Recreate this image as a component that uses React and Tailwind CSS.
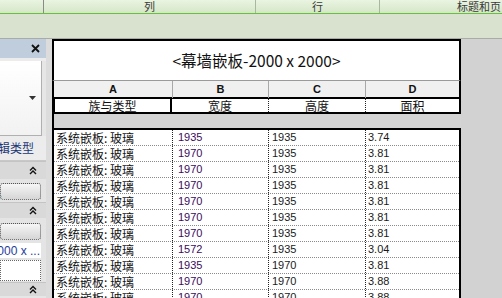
import React from "react";

const CJK = { fontFamily: '"Noto Sans CJK SC", "Liberation Sans", sans-serif' };
const NUM = { fontFamily: '"Liberation Sans", "Noto Sans CJK SC", sans-serif' };

const rows = [
  ["1935", "1935", "3.74"],
  ["1970", "1935", "3.81"],
  ["1970", "1935", "3.81"],
  ["1970", "1935", "3.81"],
  ["1970", "1935", "3.81"],
  ["1970", "1935", "3.81"],
  ["1970", "1935", "3.81"],
  ["1572", "1935", "3.04"],
  ["1935", "1970", "3.81"],
  ["1970", "1970", "3.88"],
  ["1970", "1970", "3.88"],
];

function Chevrons() {
  return (
    <svg width="8" height="9" viewBox="0 0 8 9" className="block">
      <polyline points="1,4.5 4,1.5 7,4.5" fill="none" stroke="#111" strokeWidth="1.4" />
      <polyline points="1,8 4,5 7,8" fill="none" stroke="#111" strokeWidth="1.4" />
    </svg>
  );
}

function SectionHeader({ h }) {
  return (
    <div className={`${h} flex items-center justify-end pr-[9px] bg-[#d9d9d9] border-t border-[#c4c4c4]`}>
      <Chevrons />
    </div>
  );
}

export default function App() {
  return (
    <div className="w-[502px] h-[298px] overflow-hidden flex flex-col bg-[#d2d2d2]" style={CJK}>
      {/* ribbon labels */}
      <div className="h-[14px] flex border-b border-[#68c040] bg-gradient-to-b from-[#eaf4e2] to-[#d5e7c7] text-[11px] leading-none text-[#3a3a3a] whitespace-nowrap">
        <div className="w-[44px] shrink-0 border-r border-[#8a8a8a]"></div>
        <div className="w-[212px] shrink-0 flex items-center justify-center border-r border-[#a8b8a0]">列</div>
        <div className="w-[124px] shrink-0 flex items-center justify-center border-r border-[#a8b8a0]">行</div>
        <div className="flex-1 min-w-0 flex items-center justify-start pl-[77px] overflow-hidden">标题和页</div>
      </div>
      <div className="h-[25px] bg-[#d8e2cf] border-b border-[#a9aca6]"></div>

      {/* content */}
      <div className="flex flex-1 min-h-0">
        {/* properties panel */}
        <div className="w-[46px] shrink-0 flex flex-col bg-[#e6e6e6] overflow-hidden">
          <div className="h-[19px] shrink-0 bg-[#bfcddc] flex items-center justify-end pr-[6px]">
            <svg width="9" height="9" viewBox="0 0 9 9">
              <path d="M1 1 L8 8 M8 1 L1 8" stroke="#111" strokeWidth="1.8" />
            </svg>
          </div>
          <div className="h-[3px] shrink-0 bg-[#ececec]"></div>
          <div className="h-[75px] shrink-0 mr-[4px] bg-gradient-to-b from-[#ffffff] to-[#f2f2f2] border-r border-b border-[#b0b0b0] flex items-center justify-end pr-[5px]">
            <svg width="7" height="5" viewBox="0 0 7 5">
              <polygon points="0,0 7,0 3.5,4" fill="#333" />
            </svg>
          </div>
          <div className="h-[25px] shrink-0 bg-[#ececec] flex items-center justify-end pr-[12px] border-b border-[#c8c8c8] overflow-hidden">
            <span className="text-[12px] leading-none text-[#1c3676] whitespace-nowrap">编辑类型</span>
          </div>
          <SectionHeader h="h-[18px]" />
          <div className="h-[23px] shrink-0 bg-[#e4e4e4] pt-[4px] pr-[5px]">
            <div className="h-[17px] rounded-[3px] border border-dotted border-[#555] bg-gradient-to-b from-[#f6f6f6] to-[#d6d6d6] flex items-end overflow-hidden">
              <span className="text-[11px] leading-[12px] -ml-[8px] text-[#111]" style={NUM}>...</span>
            </div>
          </div>
          <SectionHeader h="h-[16px]" />
          <div className="h-[64px] shrink-0 bg-[#e4e4e4] pt-[5px] pr-[5px] flex flex-col">
            <div className="h-[17px] rounded-[3px] border border-dotted border-[#555] bg-gradient-to-b from-[#f6f6f6] to-[#d6d6d6]"></div>
            <div className="h-[15px] mt-[3px] bg-white flex items-center justify-end overflow-hidden pr-[1px]">
              <span className="text-[12px] leading-none text-[#1f3d9c] whitespace-nowrap" style={NUM}>2000 x ...</span>
            </div>
            <div className="h-[21px] mt-[2px] bg-white border border-dotted border-[#666]"></div>
          </div>
          <SectionHeader h="h-[14px]" />
        </div>
        <div className="w-[6px] shrink-0 bg-[#dcdcdc]"></div>

        {/* schedule */}
        <div className="flex-1 flex flex-col">
          <div className="w-[409px]">
            {/* title */}
            <div className="h-[41px] bg-white border-t-2 border-x-2 border-black flex items-center justify-center text-[15.5px] text-[#111]">
              &lt;幕墙嵌板-2000 x 2000&gt;
            </div>
            {/* letters */}
            <div className="h-[17px] bg-[#f0f0f0] border-t border-x-2 border-x-black border-t-[#9a9a9a] grid grid-cols-[118px_96px_97px_94px] text-[11px] font-bold text-[#111]" style={NUM}>
              <div className="flex items-center justify-center">A</div>
              <div className="flex items-center justify-center border-l border-[#a8a8a8]">B</div>
              <div className="flex items-center justify-center border-l border-[#a8a8a8]">C</div>
              <div className="flex items-center justify-center border-l border-[#a8a8a8]">D</div>
            </div>
            {/* headers */}
            <div className="h-[17px] bg-white border-y-2 border-x-2 border-black grid grid-cols-[118px_96px_97px_94px] text-[12px] leading-none text-[#111]">
              <div className="flex items-center justify-center border-x-2 border-black -ml-[1px]">族与类型</div>
              <div className="flex items-center justify-center">宽度</div>
              <div className="flex items-center justify-center border-l border-dotted border-[#222]">高度</div>
              <div className="flex items-center justify-center border-l border-dotted border-[#222]">面积</div>
            </div>
            {/* gap */}
            <div className="h-[14px] bg-[#d4d4d4] border-l-2 border-black"></div>
            {/* data */}
            <div className="bg-white border-t-2 border-x-2 border-black">
              {rows.map((r, i) => (
                <div key={i} className="h-[16px] grid grid-cols-[118px_96px_97px_94px] border-b border-dotted border-[#8a8a8a]">
                  <div className="flex items-center pl-[2px] text-[12px] leading-none text-[#111] whitespace-nowrap">系统嵌板: 玻璃</div>
                  <div className="flex items-center pl-[5px] text-[11px] leading-none text-[#3c0a5c] border-l border-dotted border-[#222]" style={NUM}>{r[0]}</div>
                  <div className="flex items-center pl-[3px] text-[11px] leading-none text-[#1a1a1a] border-l border-dotted border-[#222]" style={NUM}>{r[1]}</div>
                  <div className="flex items-center pl-[2px] text-[11px] leading-none text-[#1a1a1a] border-l border-dotted border-[#222]" style={NUM}>{r[2]}</div>
                </div>
              ))}
            </div>
          </div>
        </div>
      </div>
    </div>
  );
}
